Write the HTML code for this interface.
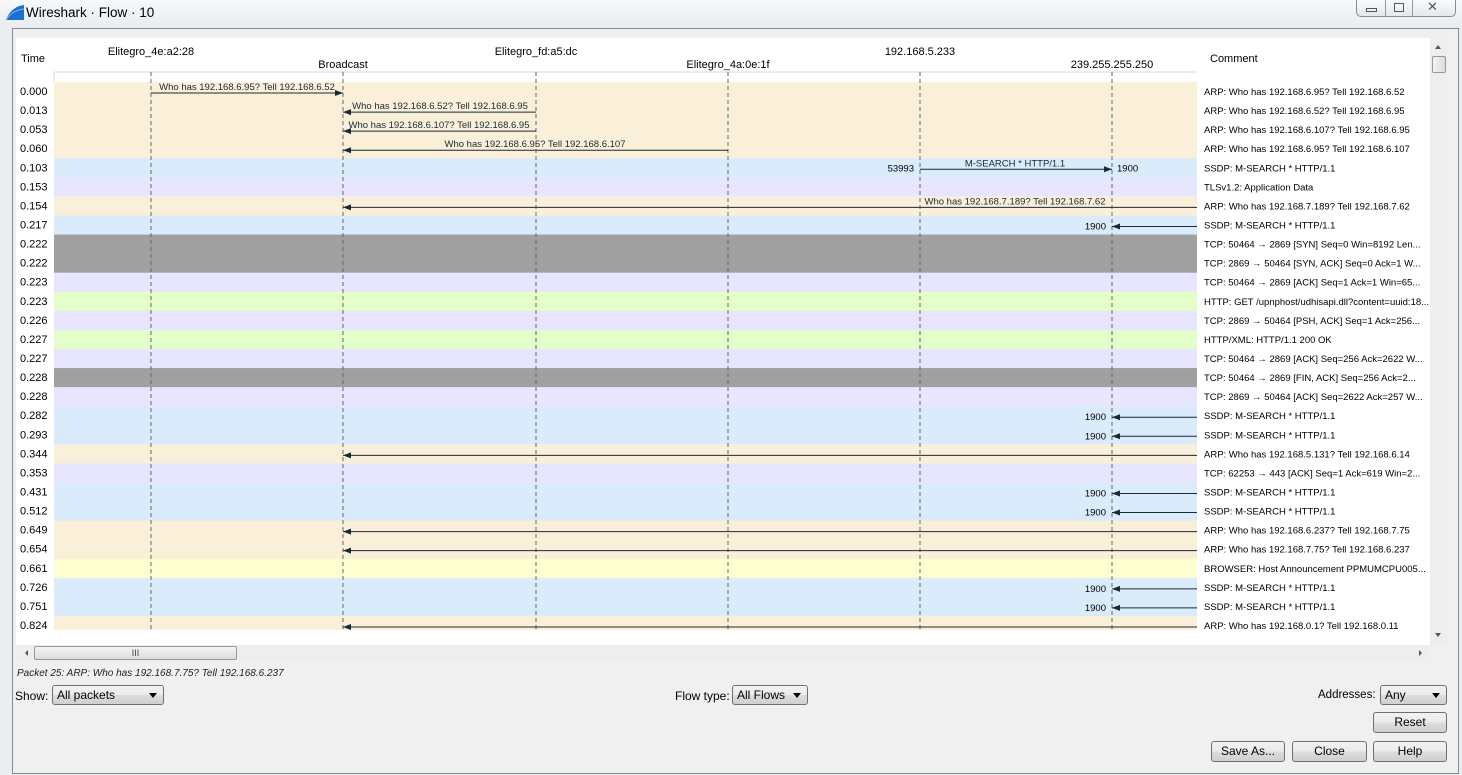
<!DOCTYPE html>
<html><head><meta charset="utf-8"><style>
*{box-sizing:border-box;margin:0;padding:0}
body{width:1462px;height:775px;overflow:hidden;background:#eaeef3;font-family:"Liberation Sans",sans-serif;font-size:11px;color:#000;position:relative}
.abs{position:absolute}
.title{left:0;top:0;width:1462px;height:28px;background:linear-gradient(#f6f8fa,#e9edf1)}
.client{left:12px;top:28px;width:1447px;height:746px;background:#f0f0f0;border:1px solid #8a8a8a}
.btn{position:absolute;height:21px;border:1px solid #707070;border-radius:3px;background:linear-gradient(#f2f2f2,#ebebeb 50%,#dddddd 51%,#cfcfcf);text-align:center;line-height:19px;font-size:12px}
.combo{position:absolute;height:20px;border:1px solid #707070;border-radius:3px;background:linear-gradient(#f2f2f2,#ebebeb 50%,#dddddd 51%,#cfcfcf);font-size:12px;line-height:18px;padding-left:4px}
.combo:after{content:"";position:absolute;right:6px;top:7px;border:4px solid transparent;border-top:5px solid #000}
</style></head><body>
<div class="abs title">
 <svg class="abs" style="left:5px;top:4px" width="20" height="18"><path d="M1 16 C4 8 10 2 19 1 L19 16 Z" fill="#1f6fd0"/><path d="M1 16 C5 10 10 6 19 5" stroke="#7fb3f0" fill="none"/></svg>
 <div class="abs" style="left:26px;top:5px;font-size:13.5px">Wireshark · Flow · 10</div>
 <div class="abs" style="left:1356px;top:0;width:100px;height:17px;border:1px solid #8c8c8c;border-top:none;border-radius:0 0 5px 5px;background:linear-gradient(#fafafa,#e4e8ec)">
  <div class="abs" style="left:28px;top:0;width:1px;height:16px;background:#999"></div>
  <div class="abs" style="left:55px;top:0;width:1px;height:16px;background:#999"></div>
  <div class="abs" style="left:9px;top:8px;width:11px;height:4px;border:1px solid #555"></div>
  <div class="abs" style="left:37px;top:3px;width:10px;height:9px;border:1px solid #555"></div>
  <div class="abs" style="left:70px;top:-1px;font-size:13px;color:#555">✕</div>
 </div>
</div>
<div class="abs client"></div>
<div class="abs" style="left:16px;top:38px;width:1414px;height:607px;background:#fff"></div>
<svg class="abs" style="left:0;top:0" width="1462" height="775" id="g"></svg>
<div class="abs" style="left:1430px;top:38px;width:17px;height:607px;background:#eeeeee"></div>
<div class="abs" style="left:1435px;top:42px;border:3px solid transparent;border-bottom:4px solid #555"></div>
<div class="abs" style="left:1432px;top:56px;width:14px;height:17px;border:1px solid #999;border-radius:2px;background:linear-gradient(90deg,#f4f4f4,#dcdcdc)"></div>
<div class="abs" style="left:1435px;top:633px;border:3px solid transparent;border-top:4px solid #555"></div>
<div class="abs" style="left:16px;top:645px;width:1414px;height:16px;background:#eeeeee"></div>
<div class="abs" style="left:22px;top:650px;border:3px solid transparent;border-right:3px solid #555"></div>
<div class="abs" style="left:34px;top:646px;width:203px;height:14px;border:1px solid #999;border-radius:2px;background:linear-gradient(#f4f4f4,#dcdcdc);text-align:center;font-size:9px;line-height:12px;color:#444">III</div>
<div class="abs" style="left:1419px;top:650px;border:3px solid transparent;border-left:3px solid #555"></div>
<div class="abs" style="left:17px;top:668px;font-size:10px;font-style:italic;color:#222">Packet 25: ARP: Who has 192.168.7.75? Tell 192.168.6.237</div>
<div class="abs" style="left:15px;top:689px;font-size:12px">Show:</div>
<div class="combo" style="left:52px;top:685px;width:112px">All packets</div>
<div class="abs" style="left:675px;top:689px;font-size:12px">Flow type:</div>
<div class="combo" style="left:732px;top:685px;width:76px">All Flows</div>
<div class="abs" style="left:1318px;top:689px;font-size:11.5px">Addresses:</div>
<div class="combo" style="left:1380px;top:685px;width:67px">Any</div>
<div class="btn" style="left:1373px;top:712px;width:74px">Reset</div>
<div class="btn" style="left:1211px;top:741px;width:74px">Save As...</div>
<div class="btn" style="left:1292px;top:741px;width:75px">Close</div>
<div class="btn" style="left:1373px;top:741px;width:74px">Help</div>
<script>
var T=["0.000","0.013","0.053","0.060","0.103","0.153","0.154","0.217","0.222","0.222","0.223","0.223","0.226","0.227","0.227","0.228","0.228","0.282","0.293","0.344","0.353","0.431","0.512","0.649","0.654","0.661","0.726","0.751","0.824"];
var C=["ARP: Who has 192.168.6.95? Tell 192.168.6.52","ARP: Who has 192.168.6.52? Tell 192.168.6.95","ARP: Who has 192.168.6.107? Tell 192.168.6.95","ARP: Who has 192.168.6.95? Tell 192.168.6.107","SSDP: M-SEARCH * HTTP/1.1","TLSv1.2: Application Data","ARP: Who has 192.168.7.189? Tell 192.168.7.62","SSDP: M-SEARCH * HTTP/1.1","TCP: 50464 → 2869 [SYN] Seq=0 Win=8192 Len...","TCP: 2869 → 50464 [SYN, ACK] Seq=0 Ack=1 W...","TCP: 50464 → 2869 [ACK] Seq=1 Ack=1 Win=65...","HTTP: GET /upnphost/udhisapi.dll?content=uuid:18...","TCP: 2869 → 50464 [PSH, ACK] Seq=1 Ack=256...","HTTP/XML: HTTP/1.1 200 OK","TCP: 50464 → 2869 [ACK] Seq=256 Ack=2622 W...","TCP: 50464 → 2869 [FIN, ACK] Seq=256 Ack=2...","TCP: 2869 → 50464 [ACK] Seq=2622 Ack=257 W...","SSDP: M-SEARCH * HTTP/1.1","SSDP: M-SEARCH * HTTP/1.1","ARP: Who has 192.168.5.131? Tell 192.168.6.14","TCP: 62253 → 443 [ACK] Seq=1 Ack=619 Win=2...","SSDP: M-SEARCH * HTTP/1.1","SSDP: M-SEARCH * HTTP/1.1","ARP: Who has 192.168.6.237? Tell 192.168.7.75","ARP: Who has 192.168.7.75? Tell 192.168.6.237","BROWSER: Host Announcement PPMUMCPU005...","SSDP: M-SEARCH * HTTP/1.1","SSDP: M-SEARCH * HTTP/1.1","ARP: Who has 192.168.0.1? Tell 192.168.0.11"];
var col={t:"#faefd8",b:"#daebfc",l:"#e7e6fe",g:"#a0a0a0",d:"#e3fec8",y:"#feffd0"};
var key="ttttbltbggldldlglbbtlbbttybbt";
var X=[151,343,536,728,920,1112];
var s='';
var h=19.07;
s+='<line x1="54" y1="72" x2="1197" y2="72" stroke="#d8d8d8"/><line x1="54" y1="72" x2="54" y2="82" stroke="#d8d8d8"/>';
for(var i=0;i<29;i++){var y=82+i*h;var hh=Math.min(h+0.5,630-y);s+='<rect x="54" y="'+y+'" width="1143" height="'+hh+'" fill="'+col[key[i]]+'"/>';}
for(var j=0;j<6;j++)s+='<line x1="'+X[j]+'" y1="72" x2="'+X[j]+'" y2="630" stroke="#666" stroke-dasharray="4,3"/>';
var names=[["Elitegro_4e:a2:28",51],["Broadcast",64],["Elitegro_fd:a5:dc",51],["Elitegro_4a:0e:1f",64],["192.168.5.233",51],["239.255.255.250",64]];
for(j=0;j<6;j++)s+='<text x="'+X[j]+'" y="'+(names[j][1]+4)+'" text-anchor="middle" font-size="11">'+names[j][0]+'</text>';
s+='<text x="21" y="62" font-size="11">Time</text><text x="1210" y="62" font-size="11" fill="#000">Comment</text>';
for(i=0;i<29;i++){var y=82+i*h;s+='<text x="20" y="'+(y+13)+'" font-size="11">'+T[i]+'</text><text x="1204" y="'+(y+13)+'" font-size="9.5">'+C[i]+'</text>';}
function arr(i,x1,x2,lab,lx){var y=82+i*h+11;s+='<line x1="'+x1+'" y1="'+y+'" x2="'+x2+'" y2="'+y+'" stroke="#1a2a33"/>';var d=x2>x1?-1:1;s+='<path d="M'+x2+' '+y+' l'+(d*8)+' -3 v6z" fill="#1a2a33"/>';if(lab)s+='<text x="'+lx+'" y="'+(y-3)+'" text-anchor="middle" font-size="9.5" fill="#1a2a33">'+lab+'</text>';}
arr(0,151,343,"Who has 192.168.6.95? Tell 192.168.6.52",247);
arr(1,536,343,"Who has 192.168.6.52? Tell 192.168.6.95",440);
arr(2,536,343,"Who has 192.168.6.107? Tell 192.168.6.95",439);
arr(3,728,343,"Who has 192.168.6.95? Tell 192.168.6.107",535);
arr(4,920,1112,"M-SEARCH * HTTP/1.1",1015);
s+='<text x="914" y="'+(82+4*h+13)+'" text-anchor="end" font-size="9.5">53993</text><text x="1117" y="'+(82+4*h+13)+'" font-size="9.5">1900</text>';
arr(6,1197,343,"Who has 192.168.7.189? Tell 192.168.7.62",1015);
[7,17,18,21,22,26,27].forEach(function(i){arr(i,1197,1112);s+='<text x="1106" y="'+(82+i*h+14)+'" text-anchor="end" font-size="9.5">1900</text>';});
[19,23,24,28].forEach(function(i){arr(i,1197,343);});
document.getElementById('g').innerHTML=s;
</script>
</body></html>
